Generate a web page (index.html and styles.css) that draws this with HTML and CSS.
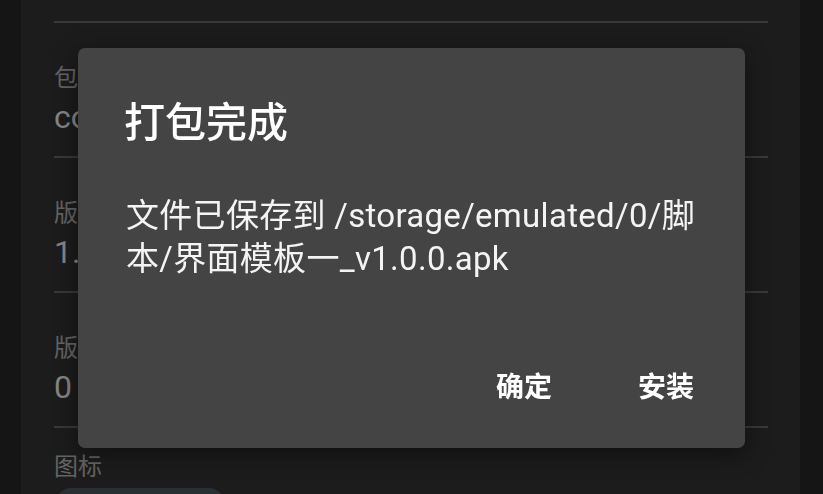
FILE: index.html
```html
<!DOCTYPE html>
<html lang="zh-CN">
<head>
<meta charset="utf-8">
<title>打包完成</title>
<link rel="stylesheet" href="styles.css">
</head>
<body>
<main class="panel">
  <section class="row">
    <div class="label">包名</div>
    <div class="value">com.example.template</div>
  </section>
  <section class="row">
    <div class="label">版本名</div>
    <div class="value">1.0.0</div>
  </section>
  <section class="row">
    <div class="label">版本号</div>
    <div class="value">0</div>
  </section>
  <section class="row row-icon">
    <div class="label">图标</div>
    <div class="icon-box"></div>
  </section>
</main>

<div class="overlay">
  <div class="dialog" role="dialog">
    <h1 class="dialog-title">打包完成</h1>
    <p class="dialog-body">文件已保存到 /storage/emulated/0/脚本/界面模板一_v1.0.0.apk</p>
    <div class="dialog-actions">
      <button class="btn">确定</button>
      <button class="btn">安装</button>
    </div>
  </div>
</div>
</body>
</html>
```

FILE: styles.css
```css
* { box-sizing: border-box; }

html, body {
  margin: 0;
  padding: 0;
  height: 100%;
  overflow: hidden;
}

body {
  background: #151515;
  font-family: Roboto, "Noto Sans CJK SC", sans-serif;
}

.panel {
  margin: 0 23px 0 21px;
  height: 100%;
  overflow: hidden;
  background: #1c1c1c;
  padding: 21px 32px 0 33px;
}

.row {
  border-top: 2px solid #393939;
  padding: 40px 0 19px;
}

.row-icon {
  padding-top: 24px;
}

.label {
  font-size: 24px;
  line-height: 30px;
  height: 30px;
  color: #646464;
  white-space: nowrap;
  overflow: hidden;
}

.value {
  margin-top: 4px;
  font-size: 32px;
  line-height: 40px;
  height: 40px;
  color: #858585;
  white-space: nowrap;
  overflow: hidden;
}

.icon-box {
  margin-top: 6px;
  margin-left: 3px;
  width: 166px;
  height: 60px;
  border-radius: 14px;
  background: #283034;
}

.overlay {
  position: fixed;
  inset: 0;
  display: flex;
  align-items: center;
  justify-content: center;
}

.dialog {
  width: 667px;
  margin-top: 2px;
  background: #444444;
  border-radius: 7px;
  padding: 51px 24px 36px 48px;
  box-shadow: 0 6px 24px rgba(0, 0, 0, 0.45);
  color: #ffffff;
}

.dialog-title {
  margin: 0;
  font-size: 41px;
  line-height: 48px;
  font-weight: 500;
  margin-left: -2px;
}

.dialog-body {
  margin: 47px 12px 0 0;
  font-size: 33px;
  line-height: 43px;
  letter-spacing: 0.3px;
  font-weight: 400;
  color: #f4f4f4;
}

.dialog-actions {
  margin-top: 84px;
  display: flex;
  justify-content: flex-end;
  gap: 32px;
}

.btn {
  height: 48px;
  padding: 0 27px;
  border: 0;
  background: transparent;
  color: #ffffff;
  font-family: Roboto, "Noto Sans CJK SC", sans-serif;
  font-size: 28px;
  font-weight: 700;
  line-height: 48px;
}
```
